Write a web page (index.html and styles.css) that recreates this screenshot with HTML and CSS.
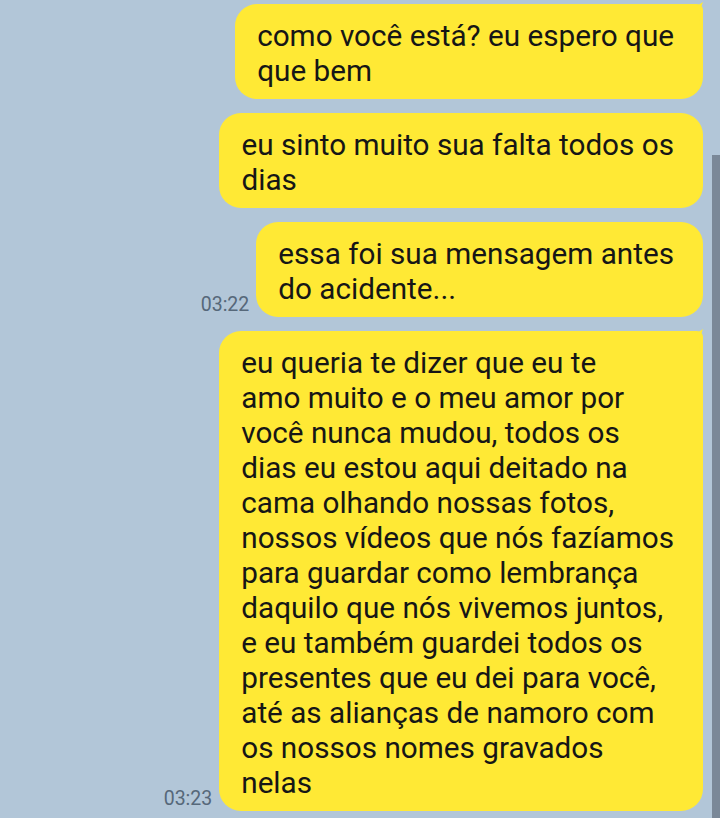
FILE: index.html
```html
<!DOCTYPE html>
<html lang="pt">
<head>
<meta charset="utf-8">
<title>Chat</title>
<link rel="stylesheet" href="styles.css">
</head>
<body>
<div class="chat">
  <div class="row">
    <div class="bubble tail">como você está? eu espero que<br>que bem<svg class="ear" width="24" height="24" viewBox="0 0 24 24"><path d="M0 6 Q12 7 21 0 Q17 8 18 24 L0 24 Z" fill="#ffe935"/></svg></div>
  </div>
  <div class="row">
    <div class="bubble">eu sinto muito sua falta todos os<br>dias</div>
  </div>
  <div class="row">
    <span class="time">03:22</span>
    <div class="bubble">essa foi sua mensagem antes<br>do acidente...</div>
  </div>
  <div class="row">
    <span class="time">03:23</span>
    <div class="bubble tail">eu queria te dizer que eu te<br>amo muito e o meu amor por<br>você nunca mudou, todos os<br>dias eu estou aqui deitado na<br>cama olhando nossas fotos,<br>nossos vídeos que nós fazíamos<br>para guardar como lembrança<br>daquilo que nós vivemos juntos,<br>e eu também guardei todos os<br>presentes que eu dei para você,<br>até as alianças de namoro com<br>os nossos nomes gravados<br>nelas<svg class="ear" width="24" height="24" viewBox="0 0 24 24"><path d="M0 6 Q12 7 21 0 Q17 8 18 24 L0 24 Z" fill="#ffe935"/></svg></div>
  </div>
</div>
<div class="scrollbar"></div>
</body>
</html>
```
FILE: styles.css
```css
html, body {
  margin: 0;
  padding: 0;
}
body {
  width: 720px;
  height: 818px;
  overflow: hidden;
  background: #b2c6d8;
  font-family: Roboto, "Noto Sans", sans-serif;
  position: relative;
}
.chat {
  display: flex;
  flex-direction: column;
  align-items: flex-end;
  gap: 14px;
  padding: 4px 17px 0 0;
}
.row {
  display: flex;
  align-items: flex-end;
  gap: 7px;
}
.bubble {
  position: relative;
  background: #ffe935;
  color: #161616;
  font-size: 29.7px;
  line-height: 35px;
  padding: 14px 29px 11px 22px;
  border-radius: 22px;
  white-space: nowrap;
}
.bubble.tail {
  border-top-right-radius: 6px;
}
.ear {
  position: absolute;
  top: -2px;
  right: -3px;
}
.time {
  font-size: 19.5px;
  line-height: 20px;
  color: #56687a;
  margin-bottom: 2px;
}
.scrollbar {
  position: absolute;
  right: 0;
  top: 155px;
  width: 8px;
  height: 663px;
  background: #7a8898;
}
```
